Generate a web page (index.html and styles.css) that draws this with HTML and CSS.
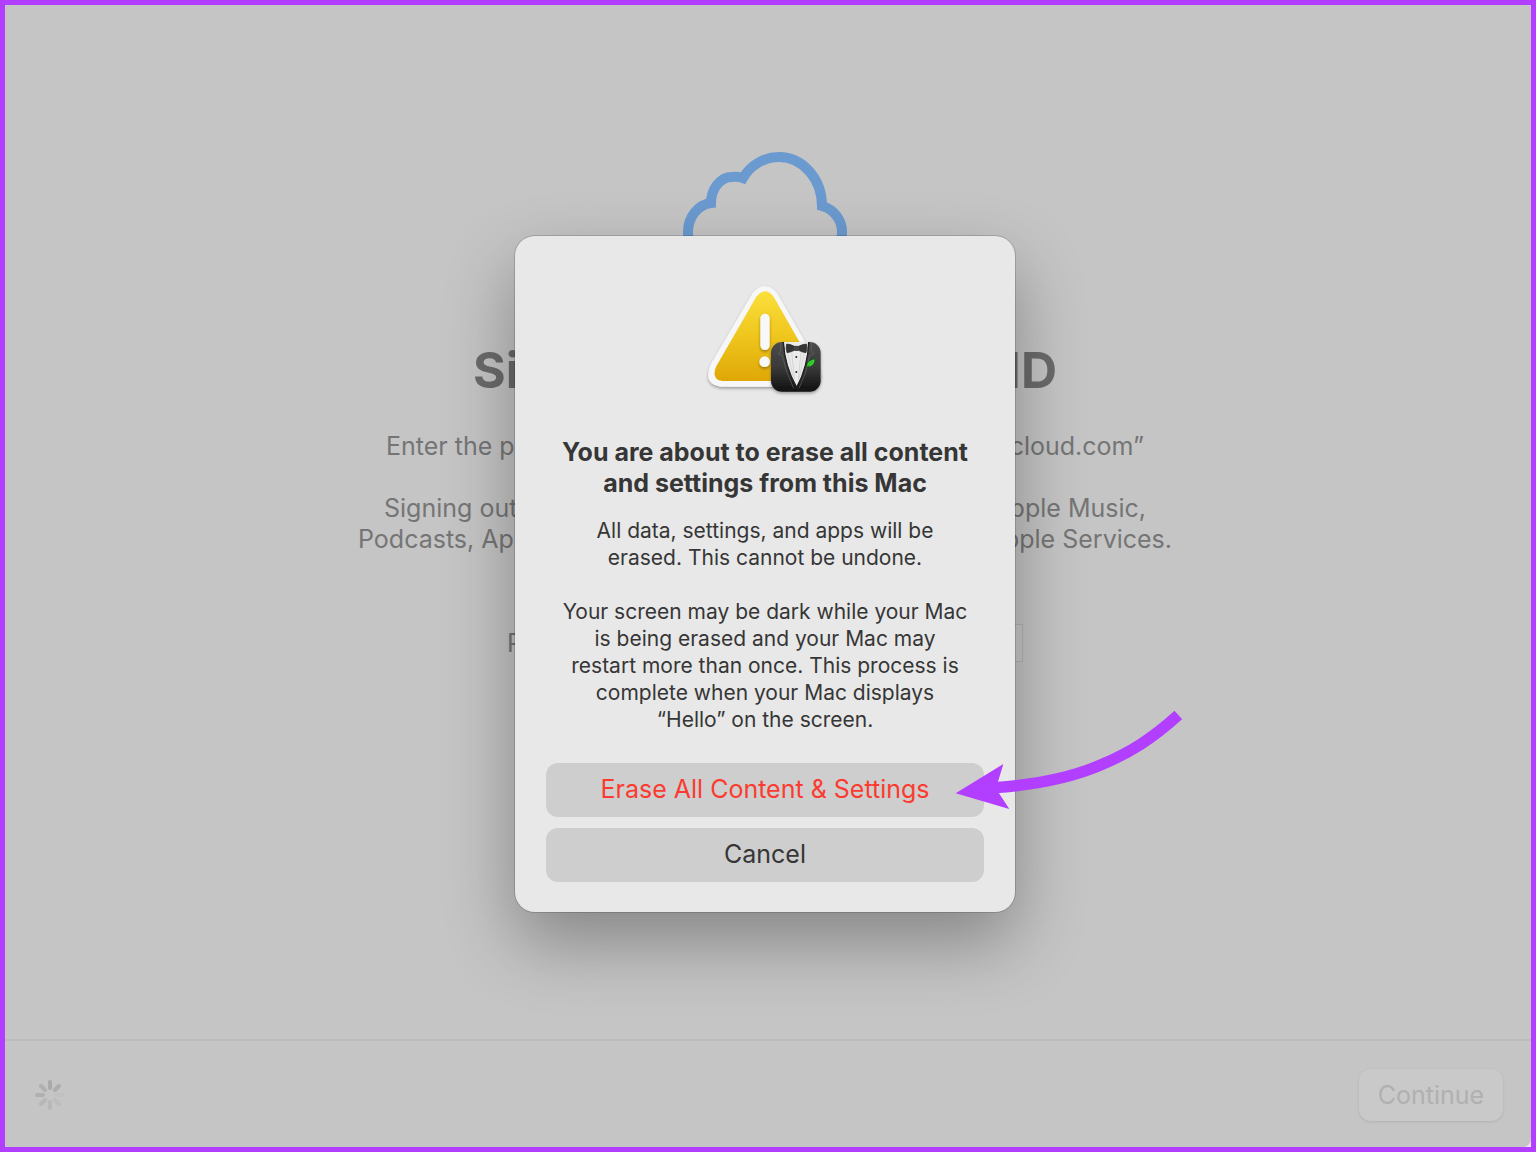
FILE: index.html
```html
<!DOCTYPE html>
<html lang="en">
<head>
	<meta charset="UTF-8">
	<title>Erase Assistant</title>
	<meta name="viewport" content="width=device-width, initial-scale=1.0">
	<link rel="stylesheet" href="styles.css">
</head>
<body>
	<div class="frame">
		<div class="window">
			<main class="signout">
				<svg class="cloud" viewBox="0 0 190 130" aria-hidden="true">
					<path d="M18 92A26 29 0 0 1 41 63A21 26 0 0 1 62 37Q68 36 73 38A42 42 0 0 1 109 17A43 49 0 0 1 152 66A27 27 0 0 1 172 93A24 24 0 0 1 148 117H42A24 24 0 0 1 18 92Z"/>
				</svg>
				<h1 class="line title"><span>Si</span><span>ID</span></h1>
				<p class="line account"><span>Enter the pa</span><span>cloud.com”</span></p>
				<p class="line services"><span>Signing out</span><span>pple Music,</span></p>
				<p class="line services-more"><span>Podcasts, App</span><span>pple Services.</span></p>
				<div class="field">
					<label for="password">P</label>
					<input type="password" id="password">
				</div>
			</main>

			<footer class="bar">
				<svg class="spinner" viewBox="0 0 32 32" aria-label="Loading">
					<path d="M16 3v6" opacity=".9"/>
					<path d="M25 7l-4 4" opacity=".8"/>
					<path d="M29 16h-6" opacity=".1"/>
					<path d="M25 25l-4-4" opacity=".25"/>
					<path d="M16 29v-6" opacity=".4"/>
					<path d="M7 25l4-4" opacity=".45"/>
					<path d="M3 16h6" opacity=".7"/>
					<path d="M7 7l4 4" opacity=".7"/>
				</svg>
				<button type="button" class="continue" disabled>Continue</button>
			</footer>
		</div>

		<div class="overlay">
			<div class="dialog" role="alertdialog" aria-labelledby="dialog-title">
				<svg class="warning" viewBox="0 0 420 420" aria-hidden="true">
					<defs>
						<linearGradient id="yellow" x1="0" y1="0" x2="0" y2="1">
							<stop offset="0" stop-color="#fbdf3c"/>
							<stop offset=".5" stop-color="#efc61d"/>
							<stop offset="1" stop-color="#dfa706"/>
						</linearGradient>
						<linearGradient id="jacket" x1="0" y1="0" x2="0" y2="1">
							<stop offset="0" stop-color="#4c4c4c"/>
							<stop offset=".5" stop-color="#3a3a3a"/>
							<stop offset="1" stop-color="#101010"/>
						</linearGradient>
						<filter id="drop" x="-20%" y="-20%" width="140%" height="140%">
							<feDropShadow dx="0" dy="5" stdDeviation="4" flood-color="#000" flood-opacity=".35"/>
						</filter>
						<clipPath id="badge"><rect x="228" y="216" width="149" height="149" rx="33"/></clipPath>
					</defs>
					<path filter="url(#drop)" fill="#f7f7f7" d="M173 69Q209 27 246 69L370 285Q394 343 339 350H78Q24 343 46 285Z"/>
					<path fill="url(#yellow)" d="M184 80Q209 48 236 80L356 290Q369 330 334 333H82Q48 328 63 290Z"/>
					<g filter="url(#drop)" fill="#f8f8f8">
						<rect x="196" y="131" width="28" height="109" rx="14"/>
						<circle cx="209" cy="275" r="16"/>
					</g>
					<g filter="url(#drop)">
						<rect x="228" y="216" width="149" height="149" rx="33" fill="url(#jacket)"/>
					</g>
					<g clip-path="url(#badge)">
						<path fill="#ebebeb" d="M266 216h74q-1 74-35 136q-35-62-39-136z"/>
						<path fill="none" stroke="#cacaca" stroke-width="2" d="M279 248l16 76M290 248l9 80M328 248l-15 76M318 248l-8 80"/>
						<path fill="none" stroke="#222" stroke-width="4" d="M265 216q4 74 40 136q34-62 36-136"/>
						<path fill="none" stroke="#666" stroke-width="2" d="M256 218l2 22l-8 12l12 5q10 50 34 98M350 218l-2 22l8 12l-12 5q-8 50-32 98"/>
						<path fill="#343434" stroke="#1c1c1c" stroke-width="2" d="M275 222q14 1 23 7h13q10-6 23-7q4 13-1 26q-12-1-22-7h-13q-11 6-22 7q-5-13-1-26z"/>
						<rect x="297" y="228" width="15" height="14" rx="4" fill="#444"/>
						<circle cx="304" cy="261" r="3" fill="#222"/>
						<circle cx="304" cy="306" r="3" fill="#222"/>
						<path fill="#3bd52f" stroke="#0c4b10" stroke-width="2" d="M335 291q-2-19 25-25q1 24-25 25z"/>
						<path fill="none" stroke="#178b1a" stroke-width="2" d="M335 291l18-18"/>
					</g>
				</svg>
				<h2 class="dialog-title" id="dialog-title">You are about to erase all content<br>and settings from this Mac</h2>
				<p class="message">All data, settings, and apps will be<br>erased. This cannot be undone.</p>
				<p class="message">Your screen may be dark while your Mac<br>is being erased and your Mac may<br>restart more than once. This process is<br>complete when your Mac displays<br>“Hello” on the screen.</p>
				<div class="actions">
					<button type="button" class="action erase">Erase All Content &amp; Settings</button>
					<button type="button" class="action">Cancel</button>
					<svg class="arrow" viewBox="0 0 810 420" aria-hidden="true">
						<path fill="none" stroke="#b23eff" stroke-width="34" d="M195 293C320 284 430 260 510 226C600 188 665 147 745 75"/>
						<path fill="#b23eff" d="M77 310L220 222L203 278L207 310L238 357Z"/>
					</svg>
				</div>
			</div>
		</div>
	</div>
</body>
</html>
```
FILE: styles.css
```css
* {
	box-sizing: border-box;
}

body {
	margin: 0;
	font-family: Inter, "Liberation Sans", sans-serif;
	color: #363636;
}

h1, h2, p {
	margin: 0;
}

button, input {
	font-family: inherit;
}

.frame {
	position: relative;
	display: flex;
	min-height: 100vh;
	border: 5px solid #b23eff;
	background: #f0e4fa;
}

.window {
	flex: 1;
	display: flex;
	flex-direction: column;
	border-radius: 0 0 8px 0;
	background: #c5c5c5;
}

/* page behind the dialog */
.signout {
	flex: 1;
	display: flex;
	flex-direction: column;
	align-items: center;
	padding: 135px 6px 0 0;
	font-size: 25px;
	line-height: 31px;
	color: #757575;
}

.cloud {
	width: 190px;
	height: 130px;
}

.cloud path {
	fill: none;
	stroke: #6b9ad0;
	stroke-width: 10;
}

.line {
	display: flex;
	justify-content: space-between;
	white-space: nowrap;
}

.title {
	width: 584px;
	margin-top: 70px;
	font-size: 50px;
	line-height: 60px;
	font-weight: 700;
	color: #6b6b6b;
}

.account {
	width: 758px;
	margin-top: 31px;
}

.services {
	width: 762px;
	margin-top: 31px;
}

.services-more {
	width: 814px;
}

.field {
	display: flex;
	align-items: center;
	gap: 120px;
	width: 516px;
	margin-top: 69px;
}

.field input {
	flex: 1;
	min-width: 0;
	height: 38px;
	border: 1px solid #b5b5b5;
	background: #c9c9c9;
}

.bar {
	display: flex;
	align-items: center;
	justify-content: space-between;
	height: 108px;
	padding: 2px 28px 0 29px;
	border-top: 2px solid #bcbcbc;
}

.spinner {
	width: 32px;
	height: 32px;
	fill: none;
	stroke: #a6a6a6;
	stroke-width: 4;
	stroke-linecap: round;
}

.continue {
	width: 144px;
	height: 52px;
	border: 0;
	border-radius: 12px;
	background: #c9c9c9;
	box-shadow: 0 1px 3px rgba(0, 0, 0, 0.1);
	font-size: 25px;
	color: #b0b0b0;
}

/* alert */
.overlay {
	position: absolute;
	inset: 0;
	display: flex;
	align-items: center;
	justify-content: center;
	padding: 0 6px 4px 0;
}

.dialog {
	display: flex;
	flex-direction: column;
	align-items: center;
	width: 500px;
	padding: 34px 31px 30px;
	border-radius: 20px;
	background: #e8e8e8;
	box-shadow: 0 0 0 1px rgba(0, 0, 0, 0.15), 0 30px 70px rgba(0, 0, 0, 0.32);
	text-align: center;
	white-space: nowrap;
}

.warning {
	width: 140px;
	height: 140px;
}

.dialog-title {
	margin-top: 27px;
	font-size: 25px;
	line-height: 31px;
	font-weight: 700;
}

.message {
	margin-top: 18px;
	font-size: 21px;
	line-height: 27px;
}

.message + .message {
	margin-top: 27px;
}

.actions {
	position: relative;
	display: flex;
	flex-direction: column;
	gap: 11px;
	width: 100%;
	margin-top: 30px;
}

.action {
	height: 54px;
	padding: 0 0 2px;
	border: 0;
	border-radius: 12px;
	background: #cecece;
	font-size: 25px;
	color: #363636;
}

.erase {
	color: #fb3b30;
}

/* pointer to the erase button */
.arrow {
	position: absolute;
	top: -73px;
	left: calc(100% - 54px);
	width: 270px;
	height: 140px;
}
```
